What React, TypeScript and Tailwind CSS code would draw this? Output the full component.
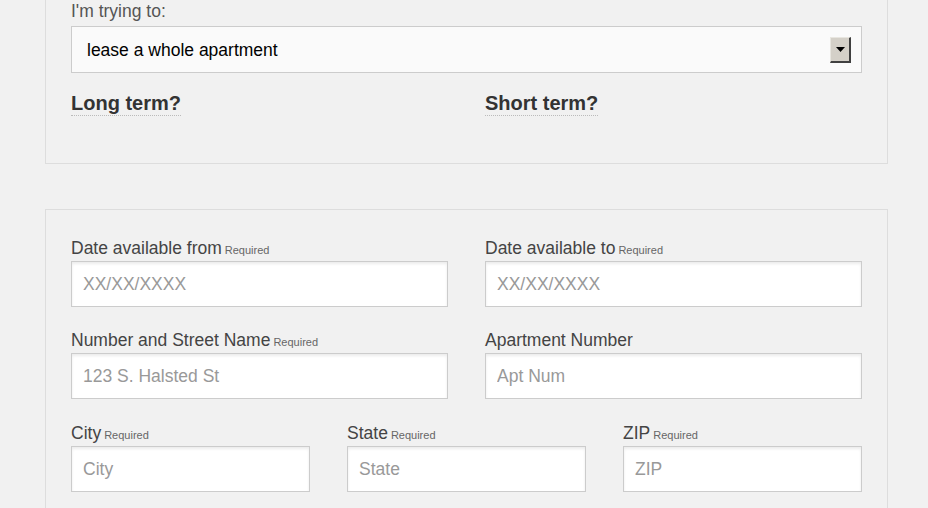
import React from 'react';

const font = { fontFamily: '"Liberation Sans", Arial, Helvetica, sans-serif' };

type FieldProps = {
  label: string;
  placeholder: string;
  required?: boolean;
};

function Field({ label, placeholder, required }: FieldProps) {
  return (
    <div className="flex flex-col">
      <div className="h-[22px] leading-[22px] mb-[2px] whitespace-nowrap">
        <span className="text-[17.5px] text-[#444]">{label}</span>
        {required && <span className="text-[11px] text-[#666] ml-[3px]">Required</span>}
      </div>
      <input
        type="text"
        placeholder={placeholder}
        className="h-[46px] w-full bg-white border border-[#cccccc] pl-[11px] text-[17.5px] text-[#333] placeholder:text-[#999] shadow-[inset_0_2px_3px_rgba(0,0,0,0.08)] outline-none"
      />
    </div>
  );
}

export default function App() {
  return (
    <div className="min-h-screen bg-[#f1f1f1] px-[45px] pb-10" style={font}>
      {/* Top panel, cropped at the top edge */}
      <div className="w-[843px] border border-t-0 border-[#dddddd] px-[25px] pb-[46px]">
        <div className="h-[22px] leading-[22px] mb-[4px] text-[17.5px] text-[#555]">I'm trying to:</div>
        <div className="h-[47px] bg-[#fafafa] border border-[#cccccc] flex items-center pl-[15px] pr-[10px]">
          <span className="flex-1 text-[17.5px] text-black pt-[2px]">lease a whole apartment</span>
          <div className="w-[21px] h-[26px] bg-[#d4d0c8] border-t border-l border-[#e8e6e0] border-r-2 border-b-2 border-r-[#404040] border-b-[#404040] flex items-center justify-center">
            <svg width="9" height="5" viewBox="0 0 9 5">
              <path d="M0 0H9L4.5 5Z" fill="#000" />
            </svg>
          </div>
        </div>
        <div className="grid grid-cols-2 gap-[37px] mt-[18px]">
          <div>
            <span className="inline-block leading-[24px] text-[20px] font-bold text-[#333] border-b border-dotted border-[#bbbbbb]">
              Long term?
            </span>
          </div>
          <div>
            <span className="inline-block leading-[24px] text-[20px] font-bold text-[#333] border-b border-dotted border-[#bbbbbb]">
              Short term?
            </span>
          </div>
        </div>
      </div>

      {/* Address panel */}
      <div className="w-[843px] mt-[45px] border border-[#dddddd] px-[25px] pt-[27px] pb-10">
        <div className="flex flex-col gap-[22px]">
          <div className="grid grid-cols-2 gap-[37px]">
            <Field label="Date available from" placeholder="XX/XX/XXXX" required />
            <Field label="Date available to" placeholder="XX/XX/XXXX" required />
          </div>
          <div className="grid grid-cols-2 gap-[37px]">
            <Field label="Number and Street Name" placeholder="123 S. Halsted St" required />
            <Field label="Apartment Number" placeholder="Apt Num" />
          </div>
          <div className="grid grid-cols-3 gap-[37px] mt-[1px]">
            <Field label="City" placeholder="City" required />
            <Field label="State" placeholder="State" required />
            <Field label="ZIP" placeholder="ZIP" required />
          </div>
        </div>
      </div>
    </div>
  );
}
